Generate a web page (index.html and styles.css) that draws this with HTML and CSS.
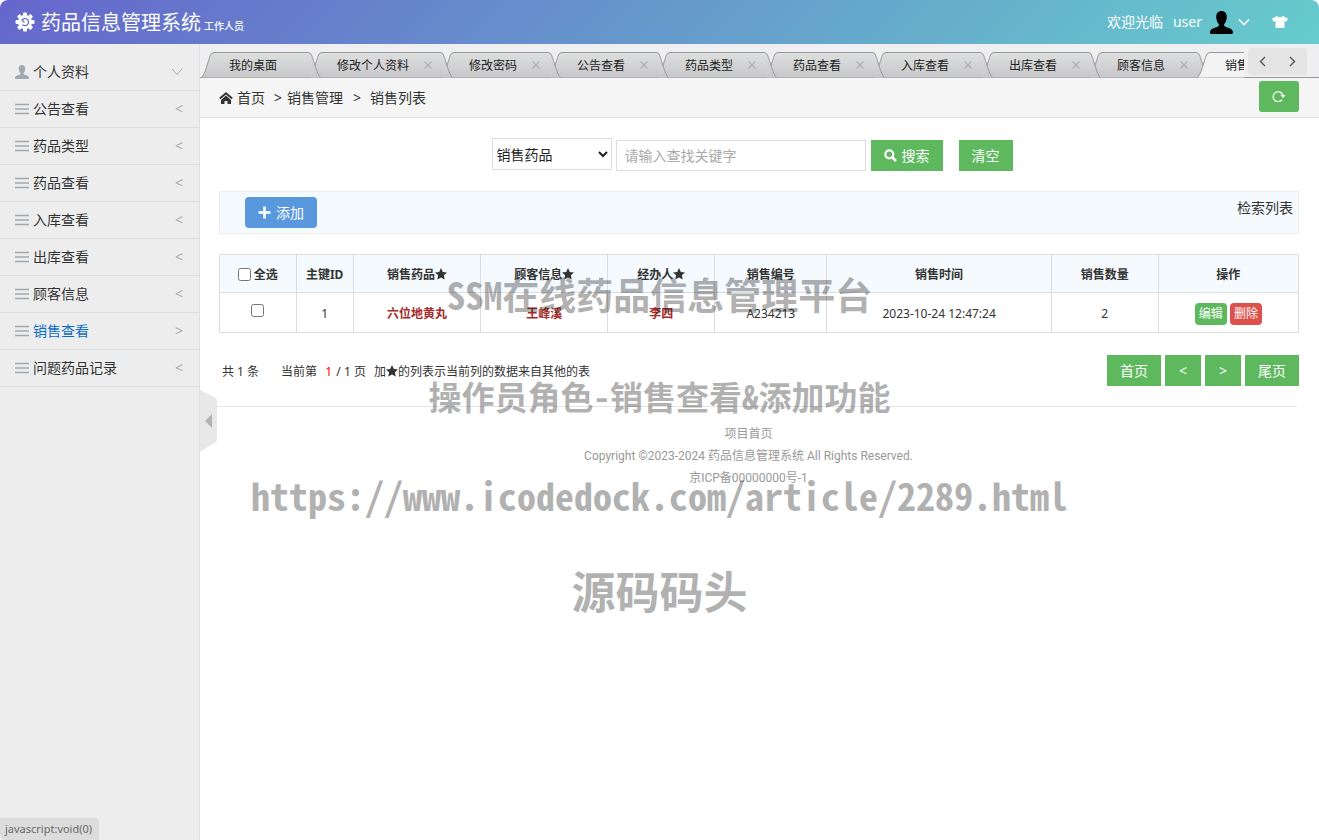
FILE: index.html
```
<!DOCTYPE html>
<html lang="zh-CN">
<head>
<meta charset="utf-8">
<title>药品信息管理系统</title>
<link rel="stylesheet" href="styles.css">
</head>
<body>
<svg class="defs" aria-hidden="true">
  <symbol id="bars" viewBox="0 0 14 12"><path d="M0 1.500h14M0 6h14M0 10.500h14" stroke="currentColor" stroke-width="1.600"/></symbol>
  <symbol id="person" viewBox="0 0 24 24"><path d="M12 0C8.500 0 6.500 2.500 6.500 6c0 3.500 1.200 6 2.700 7.600.5 1.400-.2 2.400-1.700 3C4 17.800 0 18.500 0 22.500c0 .8.500 1.500 1.500 1.500h21c1 0 1.500-.7 1.500-1.500 0-4-4-4.700-7.500-5.900-1.500-.6-2.200-1.600-1.700-3C16.300 12 17.500 9.500 17.500 6c0-3.500-2-6-5.500-6z" fill="currentColor"/></symbol>
  <symbol id="star" viewBox="0 0 12 12"><path d="M6 0l1.800 3.900 4.200.5-3.100 2.900.8 4.300L6 9.500l-3.700 2.100.8-4.300L0 4.400l4.200-.5z" fill="currentColor"/></symbol>
  <symbol id="cross" viewBox="0 0 8 8"><path d="M.5.5l7 7M7.500.5l-7 7" stroke="currentColor" stroke-width="1.100"/></symbol>
  <symbol id="tab4" viewBox="0 0 120 26"><path d="M.5 25.500C4 23 7 9 9.500 3Q10.500.5 13 .5h94q2.500 0 3.500 2.500c2.500 6 5.500 20 9 22.500"/></symbol>
  <symbol id="tab6" viewBox="0 0 144 26"><path d="M.5 25.500C4 23 7 9 9.500 3Q10.500.5 13 .5h118q2.500 0 3.500 2.500c2.500 6 5.500 20 9 22.500"/></symbol>
  <linearGradient id="tabfill" x1="0" y1="0" x2="0" y2="1"><stop offset="0" stop-color="#dedfdf"/><stop offset="1" stop-color="#c8c8ca"/></linearGradient>
</svg>

<header class="topbar">
  <svg class="gear" viewBox="0 0 20 20"><g fill="#fff"><circle cx="10" cy="10" r="7"/><rect x="8" y="0.500" width="4" height="19" rx="1"/><rect x="0.500" y="8" width="19" height="4" rx="1"/><g transform="rotate(45 10 10)"><rect x="8" y="0.500" width="4" height="19" rx="1"/><rect x="0.500" y="8" width="19" height="4" rx="1"/></g></g><path d="M7.500 12.800A3.600 3.600 0 1 0 7 8l2.500 2.500" fill="none" stroke="#6a6acd" stroke-width="1.200"/></svg>
  <h1 class="brand">药品信息管理系统</h1>
  <span class="role">工作人员</span>
  <div class="account">
    <span>欢迎光临</span>
    <span class="username">user</span>
    <svg class="avatar"><use href="#person"/></svg>
    <svg class="caret" viewBox="0 0 12 8"><path d="M1 1.500l5 5 5-5" fill="none" stroke="#fff" stroke-width="1.600"/></svg>
    <svg class="shirt" viewBox="0 0 16 12"><path d="M5 0q3 2.500 6 0l5 2.500-1.500 3.300L12.500 5v7h-9V5l-2 .8L0 2.500z" fill="#fff"/></svg>
  </div>
</header>

<div class="layout">
  <nav class="sidebar">
    <a class="item" href="#"><svg class="item-icon user"><use href="#person"/></svg>个人资料<svg class="fold" viewBox="0 0 12 8"><path d="M1 1l5 5.500L11 1" fill="none" stroke="currentColor"/></svg></a>
    <a class="item" href="#"><svg class="item-icon"><use href="#bars"/></svg>公告查看<span class="arrow">&lt;</span></a>
    <a class="item" href="#"><svg class="item-icon"><use href="#bars"/></svg>药品类型<span class="arrow">&lt;</span></a>
    <a class="item" href="#"><svg class="item-icon"><use href="#bars"/></svg>药品查看<span class="arrow">&lt;</span></a>
    <a class="item" href="#"><svg class="item-icon"><use href="#bars"/></svg>入库查看<span class="arrow">&lt;</span></a>
    <a class="item" href="#"><svg class="item-icon"><use href="#bars"/></svg>出库查看<span class="arrow">&lt;</span></a>
    <a class="item" href="#"><svg class="item-icon"><use href="#bars"/></svg>顾客信息<span class="arrow">&lt;</span></a>
    <a class="item current" href="#"><svg class="item-icon"><use href="#bars"/></svg>销售查看<span class="arrow">&gt;</span></a>
    <a class="item" href="#"><svg class="item-icon"><use href="#bars"/></svg>问题药品记录<span class="arrow">&lt;</span></a>
  </nav>
  <button class="collapse" aria-label="收起菜单"><svg viewBox="0 0 17 62"><path d="M0 0l14 7q3 1 3 4v38q0 3-3 4L0 62z" fill="#e8e8e8"/><path d="M12 24v14l-7-7z" fill="#b3b3b3"/></svg></button>

  <main class="main">
    <div class="tabstrip">
      <div class="tabs">
        <div class="tab"><svg class="shape"><use href="#tab4"/></svg><span>我的桌面</span></div>
        <div class="tab wide"><svg class="shape"><use href="#tab6"/></svg><span>修改个人资料</span><svg class="close"><use href="#cross"/></svg></div>
        <div class="tab"><svg class="shape"><use href="#tab4"/></svg><span>修改密码</span><svg class="close"><use href="#cross"/></svg></div>
        <div class="tab"><svg class="shape"><use href="#tab4"/></svg><span>公告查看</span><svg class="close"><use href="#cross"/></svg></div>
        <div class="tab"><svg class="shape"><use href="#tab4"/></svg><span>药品类型</span><svg class="close"><use href="#cross"/></svg></div>
        <div class="tab"><svg class="shape"><use href="#tab4"/></svg><span>药品查看</span><svg class="close"><use href="#cross"/></svg></div>
        <div class="tab"><svg class="shape"><use href="#tab4"/></svg><span>入库查看</span><svg class="close"><use href="#cross"/></svg></div>
        <div class="tab"><svg class="shape"><use href="#tab4"/></svg><span>出库查看</span><svg class="close"><use href="#cross"/></svg></div>
        <div class="tab"><svg class="shape"><use href="#tab4"/></svg><span>顾客信息</span><svg class="close"><use href="#cross"/></svg></div>
        <div class="tab active"><svg class="shape"><use href="#tab4"/></svg><span>销售查看</span></div>
      </div>
      <div class="tabnav">
        <button aria-label="向左"><svg viewBox="0 0 7 11"><path d="M6 1L1.500 5.500 6 10" fill="none" stroke="#555" stroke-width="1.400"/></svg></button>
        <button aria-label="向右"><svg viewBox="0 0 7 11"><path d="M1 1l4.500 4.500L1 10" fill="none" stroke="#555" stroke-width="1.400"/></svg></button>
      </div>
    </div>

    <div class="crumbs">
      <svg class="home" viewBox="0 0 14 12"><path d="M.8 6.500L7 1.200l6.200 5.300" fill="none" stroke="#333" stroke-width="1.800"/><path d="M7 3.500l5 4.500V12H8.500V9h-3v3H2V8z" fill="#333"/></svg>
      <a href="#">首页</a><span class="sep">&gt;</span><span>销售管理</span><span class="sep second">&gt;</span><span>销售列表</span>
      <button class="refresh" aria-label="刷新"><svg viewBox="0 0 14 12"><path d="M10.300 9.500A5 5 0 1 1 11 5.500" fill="none" stroke="#fff" stroke-width="1.300"/><path d="M8.500 5h5l-2.300 3z" fill="#fff"/></svg></button>
    </div>

    <div class="content">
      <form class="search">
        <select class="field" aria-label="查找字段"><option>销售药品</option></select>
        <input class="keyword" type="text" placeholder="请输入查找关键字" aria-label="关键字">
        <button class="btn find" type="button"><svg viewBox="0 0 13 13"><circle cx="5.300" cy="5.300" r="4" fill="none" stroke="#fff" stroke-width="2.200"/><path d="M8.300 8.300l3.700 3.700" stroke="#fff" stroke-width="2.600"/></svg>搜索</button>
        <button class="btn" type="button">清空</button>
      </form>

      <div class="toolbar">
        <button class="btn add"><svg viewBox="0 0 12 12"><path d="M6 .5v11M.5 6h11" stroke="#fff" stroke-width="2.400"/></svg>添加</button>
        <span>检索列表</span>
      </div>

      <table class="grid">
        <colgroup><col class="c-pick"><col class="c-id"><col class="c-drug"><col class="c-client"><col class="c-staff"><col class="c-code"><col class="c-time"><col class="c-count"><col class="c-ops"></colgroup>
        <thead><tr>
          <th><label class="all"><input type="checkbox">全选</label></th><th>主键ID</th>
          <th>销售药品<svg class="star"><use href="#star"/></svg></th>
          <th>顾客信息<svg class="star"><use href="#star"/></svg></th>
          <th>经办人<svg class="star"><use href="#star"/></svg></th>
          <th>销售编号</th><th>销售时间</th><th>销售数量</th><th>操作</th>
        </tr></thead>
        <tbody><tr>
          <td><input type="checkbox" aria-label="选择"></td><td>1</td><td class="ref">六位地黄丸</td><td class="ref">王峰溪</td><td class="ref">李四</td>
          <td>A234213</td><td>2023-10-24 12:47:24</td><td>2</td>
          <td><button class="mini edit">编辑</button> <button class="mini del">删除</button></td>
        </tr></tbody>
      </table>

      <div class="pager">
        <span>共 1 条</span>
        <span class="now">当前第&nbsp; <b>1</b> / 1 页</span>
        <span>加<svg class="star"><use href="#star"/></svg>的列表示当前列的数据来自其他的表</span>
        <div class="pages">
          <button class="btn">首页</button><button class="btn step">&lt;</button><button class="btn step">&gt;</button><button class="btn">尾页</button>
        </div>
      </div>
    </div>

    <footer class="footer">
      <div>项目首页</div>
      <div>Copyright ©2023-2024 药品信息管理系统 All Rights Reserved.</div>
      <div>京ICP备00000000号-1</div>
    </footer>
  </main>
</div>

<div class="mark m1">SSM在线药品信息管理平台</div>
<div class="mark m2">操作员角色-销售查看&amp;添加功能</div>
<div class="mark m3">https://www.icodedock.com/article/2289.html</div>
<div class="mark m4">源码码头</div>
<div class="status">javascript:void(0)</div>
</body>
</html>
```
FILE: styles.css
```
* { box-sizing: border-box; }
body {
  margin: 0;
  min-height: 100vh;
  display: flex;
  flex-direction: column;
  background: #fff;
  color: #333;
  font: 14px/20px "Noto Sans", "Noto Sans CJK SC", sans-serif;
  overflow: hidden;
}
a { color: inherit; text-decoration: none; }
button, input, select { font: inherit; margin: 0; }
button { border: 0; padding: 0; cursor: pointer; }
svg { display: block; flex: none; }
.defs { position: absolute; width: 0; height: 0; }

.topbar {
  height: 44px;
  display: flex;
  align-items: center;
  padding: 0 31px 0 15px;
  color: #fff;
  background: linear-gradient(135deg, #6666cc, #66cccc);
  border-radius: 8px 8px 0 0;
}
.gear { width: 20px; height: 20px; }
.brand { margin: 0 3px 0 6px; padding-top: 2px; font-size: 20px; font-weight: 400; line-height: 28px; }
.role { font-size: 10px; line-height: 12px; font-weight: 500; padding-top: 8px; }
.account { margin-left: auto; display: flex; align-items: center; }
.username { margin: 0 8px 0 10px; }
.avatar { width: 23px; height: 23px; color: #000; }
.caret { width: 12px; height: 8px; margin: 0 22px 0 5px; }
.shirt { width: 16px; height: 12px; }

.layout { flex: 1; display: flex; position: relative; }
.sidebar {
  width: 200px;
  flex: none;
  padding-top: 10px;
  background: #ededed;
  border-right: 1px solid #e0e0e0;
}
.item {
  height: 37px;
  display: flex;
  align-items: center;
  padding: 0 16px 0 15px;
  border-bottom: 1px solid #dfdfdf;
}
.item-icon { width: 14px; height: 12px; margin-right: 4px; color: #a0a9b1; }
.item-icon.user { height: 14px; }
.fold { width: 12px; height: 8px; margin-left: auto; color: #aaa; }
.arrow { margin-left: auto; color: #aaa; }
.current { color: #0b6cc4; }
.collapse {
  position: absolute;
  left: 200px;
  top: 346px;
  width: 17px;
  height: 62px;
  background: none;
  z-index: 2;
}

.main { flex: 1; min-width: 0; }
.tabstrip {
  height: 34px;
  display: flex;
  background: #efeef0;
  box-shadow: inset 0 -1px #999;
}
.tabs { flex: 1; min-width: 0; display: flex; overflow: hidden; padding: 8px 0 0 7px; }
.tab {
  position: relative;
  flex: none;
  width: 108px;
  height: 26px;
  padding-left: 22px;
  font-size: 12px;
  line-height: 28px;
  color: #222;
}
.tab.wide { width: 132px; }
.tab span { position: relative; }
.shape {
  position: absolute;
  left: -6px;
  top: 0;
  width: 120px;
  height: 26px;
  fill: url(#tabfill);
  stroke: #999;
}
.wide .shape { width: 144px; }
.close { position: absolute; right: 15px; top: 9px; width: 8px; height: 8px; color: #aab0b6; }
.tab:nth-child(1) { z-index: 9; }
.tab:nth-child(2) { z-index: 8; }
.tab:nth-child(3) { z-index: 7; }
.tab:nth-child(4) { z-index: 6; }
.tab:nth-child(5) { z-index: 5; }
.tab:nth-child(6) { z-index: 4; }
.tab:nth-child(7) { z-index: 3; }
.tab:nth-child(8) { z-index: 2; }
.tab:nth-child(9) { z-index: 1; }
.tab.active { z-index: 10; }
.active .shape { fill: #f3f3f4; }
.tabnav {
  display: flex;
  justify-content: space-around;
  width: 59px;
  height: 27px;
  margin: 4px 12px 0 4px;
  background: #e4e4e4;
  border-radius: 3px;
}
.tabnav button { width: 29px; display: grid; place-items: center; background: none; }
.tabnav svg { width: 7px; height: 11px; }

.crumbs {
  height: 40px;
  display: flex;
  align-items: center;
  padding: 0 20px 0 19px;
  background: #f5f5f5;
  border-bottom: 1px solid #e5e5e5;
}
.home { width: 14px; height: 12px; margin-right: 4px; }
.sep { margin: 0 5px 0 9px; }
.sep.second { margin: 0 9px 0 10px; }
.refresh {
  margin: -3px 0 0 auto;
  width: 40px;
  height: 31px;
  display: grid;
  place-items: center;
  background: #5eb95e;
  border-radius: 3px;
}
.refresh svg { width: 14px; height: 12px; }

.content { padding: 20px 20px 20px 19px; }
.search { display: flex; justify-content: center; padding-right: 14px; }
.field {
  width: 120px;
  height: 32px;
  margin-right: 4px;
  border: 1px solid #ddd;
  background: #fff;
  color: #222;
}
.keyword {
  width: 250px;
  height: 31px;
  margin: 2px 5px 0 0;
  padding: 0 8px;
  border: 1px solid #ddd;
}
.keyword::placeholder { color: #aaa; }
.btn {
  display: flex;
  align-items: center;
  justify-content: center;
  height: 31px;
  padding: 0 13px;
  color: #fff;
  background: #5eb95e;
}
.search .btn { margin-top: 2px; }
.btn svg { width: 13px; height: 13px; margin-right: 5px; }
.search .find { margin-right: 16px; }

.toolbar {
  height: 43px;
  margin-top: 20px;
  display: flex;
  justify-content: space-between;
  padding: 5px 5px 0 25px;
  background: #f5fafe;
  border: 1px solid #eee;
}
.toolbar span { padding-top: 1px; }
.add { background: #5a98de; border-radius: 4px; }

.grid {
  width: 100%;
  margin-top: 20px;
  table-layout: fixed;
  border-collapse: separate;
  border-spacing: 0;
  border: 1px solid #ddd;
  border-width: 1px 0 0 1px;
  border-radius: 2px;
  font-size: 12px;
  text-align: center;
}
.grid th, .grid td { border: 1px solid #ddd; border-width: 0 1px 1px 0; padding: 2px 0 0; }
.grid th { height: 38px; background: #f5fafe; font-weight: 700; }
.grid td { height: 40px; }
.grid td:first-child { padding: 0; }
.grid input { width: 13px; height: 13px; }
.c-pick { width: 7.1%; }
.c-id { width: 5.3%; }
.c-drug { width: 11.8%; }
.c-client { width: 11.8%; }
.c-staff { width: 9.9%; }
.c-code { width: 10.4%; }
.c-time { width: 20.8%; }
.c-count { width: 9.9%; }
.all { display: flex; align-items: center; justify-content: center; gap: 3px; }
.star { display: inline-block; width: 12px; height: 12px; vertical-align: -1px; }
.grid .ref { color: #a52a2a; font-weight: 700; }
.mini { height: 22px; padding: 0 4px; color: #fff; border-radius: 4px; }
.edit { background: #5eb95e; }
.del { background: #dd514c; }

.pager { display: flex; align-items: center; margin-top: 22px; padding-left: 3px; font-size: 12px; }
.pager > span { padding-top: 2px; word-break: keep-all; }
.now { margin: 0 8px 0 22px; }
.now b { margin: 0 1px 0 2px; color: #f00; font-weight: 400; }
.pages { margin-left: auto; display: flex; gap: 4px; font-size: 14px; }
.step { width: 36px; }

.footer {
  margin-right: 22px;
  padding-top: 16px;
  border-top: 1px solid #e5e5e5;
  color: #999;
  font: 12px/22px Roboto, "Noto Sans CJK SC", sans-serif;
  text-align: center;
}

/* Watermark lines float over the whole page. */
.mark {
  position: absolute;
  left: 0;
  right: 0;
  text-align: center;
  white-space: nowrap;
  color: #000;
  opacity: .3;
  font-family: "Noto Sans Mono CJK SC", "Noto Sans CJK SC", monospace;
  font-weight: 700;
  pointer-events: none;
  z-index: 20;
}
.m1 { top: 274px; font-size: 37px; line-height: 40px; }
.m2 { top: 376px; font-size: 33px; line-height: 40px; }
.m3 { top: 475px; font-size: 38px; line-height: 40px; }
.m4 { top: 564px; font-size: 44px; line-height: 52px; }

.status {
  position: absolute;
  left: 0;
  bottom: 0;
  padding: 1px 7px 1px 5px;
  background: #dcdcdc;
  color: #6a6a6a;
  font-size: 11px;
  border-radius: 0 4px 0 6px;
}
```
